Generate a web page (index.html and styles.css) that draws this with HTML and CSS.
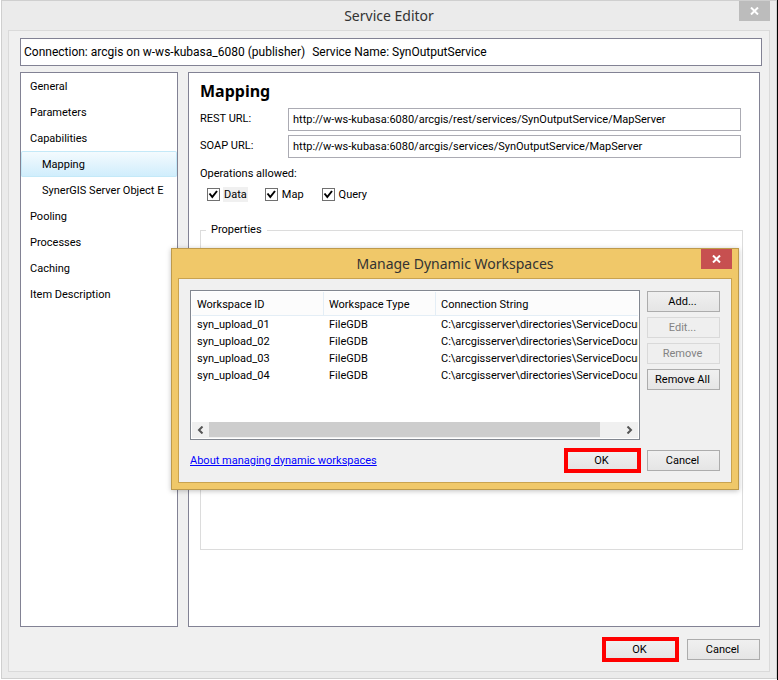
FILE: index.html
```html
<!DOCTYPE html>
<html lang="en">
<head>
<meta charset="utf-8">
<title>Service Editor</title>
<link rel="stylesheet" href="styles.css">
</head>
<body>
<div class="window">
  <header class="titlebar">
    <h1 class="title">Service Editor</h1>
    <button class="close" type="button" aria-label="Close">
      <svg width="9" height="8" viewBox="0 0 9 8"><path d="M1 .5l7 7M8 .5l-7 7"/></svg>
    </button>
  </header>
  <div class="client">
    <p class="connection"><span>Connection: arcgis on w-ws-kubasa_6080 (publisher)</span><span>Service Name: SynOutputService</span></p>
    <div class="columns">
      <nav class="nav">
        <a href="#general">General</a>
        <a href="#parameters">Parameters</a>
        <a href="#capabilities">Capabilities</a>
        <a class="child selected" href="#mapping">Mapping</a>
        <a class="child" href="#synergis">SynerGIS Server Object E</a>
        <a href="#pooling">Pooling</a>
        <a href="#processes">Processes</a>
        <a href="#caching">Caching</a>
        <a href="#item">Item Description</a>
      </nav>
      <main class="panel">
        <h2 class="heading">Mapping</h2>
        <div class="field">
          <label for="rest">REST URL:</label>
          <input id="rest" type="text" readonly value="http://w-ws-kubasa:6080/arcgis/rest/services/SynOutputService/MapServer">
        </div>
        <div class="field">
          <label for="soap">SOAP URL:</label>
          <input id="soap" type="text" readonly value="http://w-ws-kubasa:6080/arcgis/services/SynOutputService/MapServer">
        </div>
        <p class="operations">Operations allowed:</p>
        <div class="checks">
          <label class="check focused"><span class="box"><input type="checkbox" checked><svg width="13" height="13" viewBox="0 0 13 13"><path d="M2.5 5.5L5.3 9L10 3"/></svg></span><span class="name">Data</span></label>
          <label class="check"><span class="box"><input type="checkbox" checked><svg width="13" height="13" viewBox="0 0 13 13"><path d="M2.5 5.5L5.3 9L10 3"/></svg></span><span class="name">Map</span></label>
          <label class="check"><span class="box"><input type="checkbox" checked><svg width="13" height="13" viewBox="0 0 13 13"><path d="M2.5 5.5L5.3 9L10 3"/></svg></span><span class="name">Query</span></label>
        </div>
        <fieldset class="properties"><legend>Properties</legend></fieldset>
      </main>
    </div>
    <footer class="actions">
      <span class="marked"><button class="button" type="button">OK</button></span>
      <button class="button" type="button">Cancel</button>
    </footer>
  </div>
</div>

<section class="dialog" role="dialog" aria-labelledby="dialog-title">
  <header class="titlebar">
    <h2 class="title" id="dialog-title">Manage Dynamic Workspaces</h2>
    <button class="close" type="button" aria-label="Close">
      <svg width="9" height="8" viewBox="0 0 9 8"><path d="M1 .5l7 7M8 .5l-7 7"/></svg>
    </button>
  </header>
  <div class="dialog-client">
    <div class="dialog-body">
      <div class="list">
        <div class="list-view">
          <table>
            <colgroup><col class="col-id"><col class="col-type"><col></colgroup>
            <thead><tr><th>Workspace ID</th><th>Workspace Type</th><th>Connection String</th></tr></thead>
            <tbody>
              <tr><td>syn_upload_01</td><td>FileGDB</td><td>C:\arcgisserver\directories\ServiceDocum</td></tr>
              <tr><td>syn_upload_02</td><td>FileGDB</td><td>C:\arcgisserver\directories\ServiceDocum</td></tr>
              <tr><td>syn_upload_03</td><td>FileGDB</td><td>C:\arcgisserver\directories\ServiceDocum</td></tr>
              <tr><td>syn_upload_04</td><td>FileGDB</td><td>C:\arcgisserver\directories\ServiceDocum</td></tr>
            </tbody>
          </table>
        </div>
        <div class="scrollbar">
          <button type="button" aria-label="Scroll left"><svg width="7" height="8" viewBox="0 0 7 8"><path d="M5.5 .5L2 4l3.5 3.5"/></svg></button>
          <div class="track"><div class="thumb"></div></div>
          <button type="button" aria-label="Scroll right"><svg width="7" height="8" viewBox="0 0 7 8"><path d="M1.5 .5L5 4L1.5 7.5"/></svg></button>
        </div>
      </div>
      <div class="side">
        <button class="button" type="button">Add...</button>
        <button class="button" type="button" disabled>Edit...</button>
        <button class="button" type="button" disabled>Remove</button>
        <button class="button" type="button">Remove All</button>
      </div>
    </div>
    <footer class="dialog-actions">
      <a href="#about">About managing dynamic workspaces</a>
      <span class="marked"><button class="button" type="button">OK</button></span>
      <button class="button" type="button">Cancel</button>
    </footer>
  </div>
</section>
</body>
</html>
```
FILE: styles.css
```css
* { box-sizing: border-box; }

body {
  margin: 0;
  min-height: 100vh;
  display: flex;
  padding: 0 0 1px 1px;
  background: #fff;
  border-right: 1px solid #000;
  color: #000;
  font: 11px/16px Roboto, Tahoma, sans-serif;
}

h1, h2, p { margin: 0; }
button, input { font: inherit; color: inherit; }

.window {
  flex: 1;
  display: flex;
  flex-direction: column;
  padding: 0 6px 6px;
  background: #ebebeb;
  border: 1px solid #cfcfcf;
}

.titlebar {
  display: grid;
  grid-template-columns: 1fr auto 1fr;
  align-items: start;
  height: 29px;
}
.title {
  grid-column: 2;
  font-family: "Noto Sans", "Segoe UI", sans-serif;
  font-size: 14px;
  font-weight: 400;
  line-height: 29px;
  color: #333;
}
.close {
  justify-self: end;
  display: grid;
  place-items: center;
  width: 31px;
  height: 20px;
  padding: 0;
  border: 0;
  background: #bcbcbc;
}
.close svg { fill: none; stroke: #fff; stroke-width: 2; }

.client {
  flex: 1;
  display: flex;
  flex-direction: column;
  padding: 7px 7px 9px 11px;
  background: #f0f0f0;
  border: 1px solid #dadada;
}

.connection {
  display: flex;
  gap: 7px;
  padding: 0 3px;
  background: #fff;
  border: 1px solid #828294;
  font-size: 12px;
  line-height: 26px;
}

.columns {
  flex: 1;
  display: grid;
  grid-template-columns: 158px 1fr;
  gap: 10px;
  margin: 6px 2px 0 0;
}

.nav, .panel { background: #fff; border: 1px solid #828294; }
.nav a {
  display: block;
  height: 26px;
  padding: 1px 0 0 9px;
  line-height: 26px;
  white-space: nowrap;
  overflow: hidden;
  color: inherit;
  text-decoration: none;
}
.nav .child { padding-left: 21px; }
.nav .selected {
  background: linear-gradient(#f5fbfe, #cfedfc);
  box-shadow: inset 0 0 0 1px #c4e9f8;
  border-radius: 2px;
}

.panel {
  display: flex;
  flex-direction: column;
  padding: 6px 16px 76px 11px;
}
.heading {
  margin-bottom: 5px;
  font-family: "Noto Sans", Tahoma, sans-serif;
  font-size: 16px;
  line-height: 24px;
}
.field {
  display: grid;
  grid-template-columns: 88px 1fr;
  margin: 0 2px 4px 0;
  line-height: 22px;
}
.field input {
  min-width: 0;
  height: 23px;
  padding: 0 4px 1px;
  background: #fff;
  border: 1px solid #ababb3;
  outline: 0;
}
.operations { margin-top: 4px; }
.checks { display: flex; gap: 17px; margin: 5px 0 0 7px; }
.check { display: flex; align-items: center; gap: 3px; }
.box { display: grid; }
.box > * { grid-area: 1 / 1; }
.box input {
  appearance: none;
  width: 13px;
  height: 13px;
  margin: 0;
  border: 1px solid #707070;
  background: #fff;
}
.box svg { fill: none; stroke: #000; stroke-width: 2; pointer-events: none; }
.name { padding: 1px 1px 0; line-height: 14px; }
.focused .name { background: #f0f0f0; }

.properties {
  flex: 1;
  margin: 20px 0 0;
  padding: 0;
  border: 1px solid #dcdcdc;
}
.properties legend { margin-left: 5px; padding: 0 5px; }

.actions {
  display: flex;
  justify-content: flex-end;
  align-items: center;
  gap: 8px;
  margin: 10px 2px 0 0;
}
.button {
  width: 73px;
  height: 21px;
  padding: 1px 2px 0 0;
  line-height: 18px;
  background: linear-gradient(#f0f0f0, #e5e5e5);
  border: 1px solid #acacac;
}
.button:disabled { background: #efefef; border-color: #d9d9d9; color: #838383; }
.marked { display: flex; border: 4px solid #f00; }
.marked .button { width: 69px; height: 17px; line-height: 16px; border: 0; }

.dialog {
  position: absolute;
  top: 248px;
  left: 171px;
  right: 39px;
  padding: 0 6px 6px;
  background: #f0c869;
  border: 1px solid #bd9a4c;
  box-shadow: 0 1px 5px rgba(0, 0, 0, .25);
}
.dialog .close { background: #c75050; }
.dialog-client {
  padding: 11px 11px 9px;
  background: #f0f0f0;
  border: 1px solid #c9a350;
}
.dialog-body { display: flex; gap: 7px; }
.list {
  flex: 1;
  min-width: 0;
  height: 150px;
  display: flex;
  flex-direction: column;
  padding: 1px;
  background: #fff;
  border: 1px solid #828790;
}
.list-view { flex: 1; overflow: hidden; }
.list table { width: 100%; table-layout: fixed; border-collapse: separate; border-spacing: 0; }
.col-id { width: 132px; }
.col-type { width: 112px; }
.list th, .list td {
  padding: 1px 0 0 5px;
  overflow: hidden;
  white-space: nowrap;
  text-align: left;
  font-weight: 400;
  line-height: 16px;
}
.list th {
  height: 24px;
  padding-top: 2px;
  background: #fcfcfc;
  border-right: 1px solid #e4eef6;
  border-bottom: 1px solid #e4eef6;
}
.list th:last-child { border-right: 0; }
.scrollbar { display: flex; height: 16px; background: #f0f0f0; }
.scrollbar button {
  display: grid;
  place-items: center;
  width: 17px;
  padding: 0;
  border: 0;
  background: none;
}
.scrollbar svg { fill: none; stroke: #555; stroke-width: 2; }
.track { flex: 1; }
.thumb { width: 95%; height: 15px; background: #cdcdcd; }

.side { display: flex; flex-direction: column; gap: 5px; padding-top: 1px; }
.dialog-actions { display: flex; align-items: center; gap: 6px; margin-top: 8px; }
.dialog-actions a { margin-right: auto; color: #00f; }
```
